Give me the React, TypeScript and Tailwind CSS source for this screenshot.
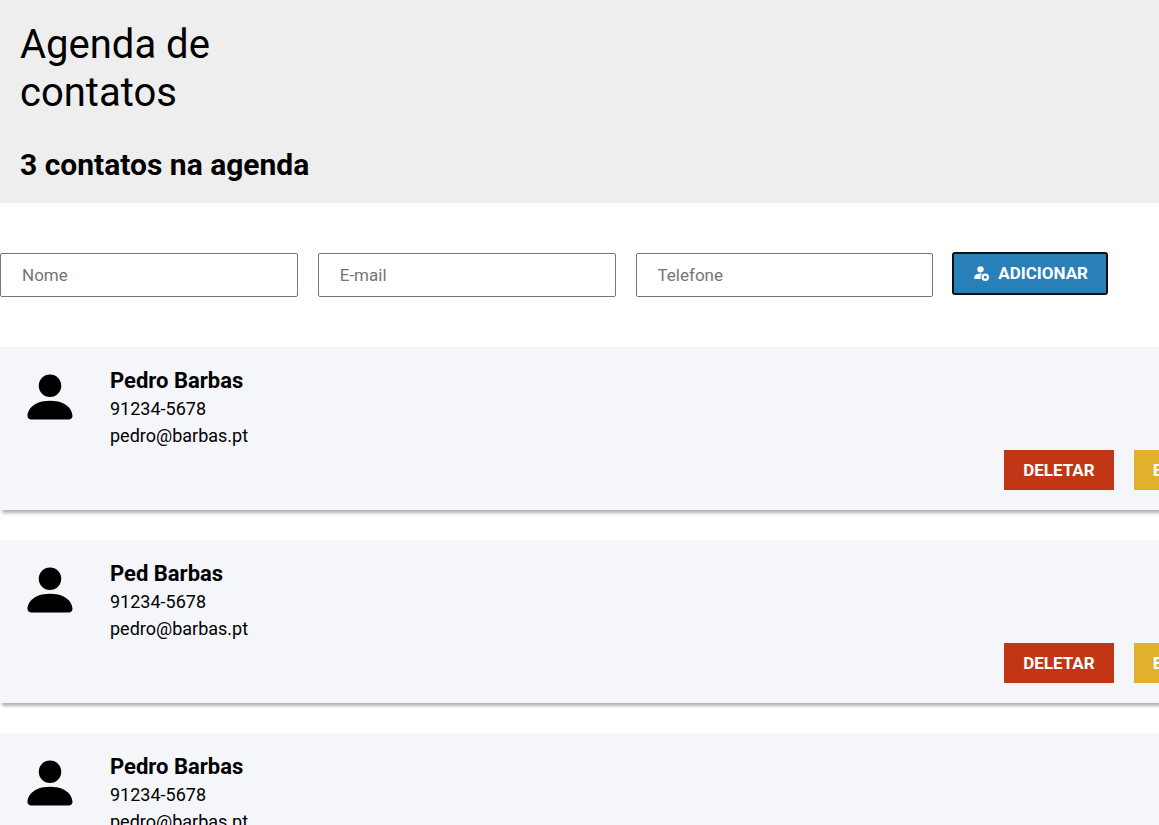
import { useState } from "react";
import { BsPersonFill } from "react-icons/bs";

type Contact = { id: number; name: string; phone: string; email: string };

const initialContacts: Contact[] = [
  { id: 1, name: "Pedro Barbas", phone: "91234-5678", email: "pedro@barbas.pt" },
  { id: 2, name: "Ped Barbas", phone: "91234-5678", email: "pedro@barbas.pt" },
  { id: 3, name: "Pedro Barbas", phone: "91234-5678", email: "pedro@barbas.pt" },
];

const fields = [
  { name: "nome", label: "Nome", type: "text" },
  { name: "email", label: "E-mail", type: "email" },
  { name: "telefone", label: "Telefone", type: "tel" },
];

function PersonBadgeIcon() {
  return (
    <svg viewBox="0 0 16 16" fill="currentColor" aria-hidden="true" className="mb-1 size-[17px]">
      <path d="M11 5a3 3 0 1 1-6 0 3 3 0 0 1 6 0" />
      <path d="M2 13c0 1 1 1 1 1h5.256A4.5 4.5 0 0 1 8 12.5a4.5 4.5 0 0 1 1.544-3.393Q8.844 9.002 8 9c-5 0-6 3-6 4" />
      <path
        fillRule="evenodd"
        d="M12.5 9a3.5 3.5 0 1 1 0 7 3.5 3.5 0 0 1 0-7m0 2.1a1.4 1.4 0 1 0 0 2.8 1.4 1.4 0 0 0 0-2.8"
      />
    </svg>
  );
}

function ContactForm({ onAdd }: { onAdd: (data: FormData) => void }) {
  return (
    <form
      className="my-[50px] mr-[52px] grid grid-cols-[1fr_1fr_1fr_auto] items-start gap-5"
      onSubmit={(event) => {
        event.preventDefault();
        onAdd(new FormData(event.currentTarget));
        event.currentTarget.reset();
      }}
    >
      {fields.map((field) => (
        <input
          key={field.name}
          name={field.name}
          type={field.type}
          aria-label={field.label}
          placeholder={field.label}
          className="h-11 w-full min-w-0 rounded-xs border border-[#767676] bg-white px-[21px] text-[17px] placeholder:text-[#757575]"
        />
      ))}
      <button
        type="submit"
        className="flex h-[41px] items-center gap-[9px] rounded-xs bg-[#2980b9] px-[19px] pt-px text-[17px] font-bold text-white uppercase outline-2 -outline-offset-1 outline-[#101010]"
      >
        <PersonBadgeIcon />
        Adicionar
      </button>
    </form>
  );
}

function ContactCard({ contact, onDelete }: { contact: Contact; onDelete: () => void }) {
  return (
    <li className="flex gap-[30px] bg-[#f5f6fa] p-5 shadow-[2px_3px_3px_rgba(0,0,0,0.3)]">
      <BsPersonFill aria-hidden="true" className="size-[60px] shrink-0" />
      <div className="flex-1">
        <h3 className="text-[22px] leading-7 font-bold">{contact.name}</h3>
        <p className="text-lg leading-[27px]">{contact.phone}</p>
        <p className="text-lg leading-[27px]">{contact.email}</p>
        <div className="mt-px flex justify-end gap-5">
          <button
            type="button"
            onClick={onDelete}
            className="h-10 bg-[#c23616] px-[19px] pt-px text-[17px] font-bold text-white uppercase"
          >
            Deletar
          </button>
          <button type="button" className="h-10 bg-[#e1b12c] px-[19px] pt-px text-[17px] font-bold text-white uppercase">
            Editar
          </button>
        </div>
      </div>
    </li>
  );
}

export default function App() {
  const [contacts, setContacts] = useState(initialContacts);

  const addContact = (data: FormData) =>
    setContacts((current) => [
      ...current,
      {
        id: Date.now(),
        name: String(data.get("nome")),
        phone: String(data.get("telefone")),
        email: String(data.get("email")),
      },
    ]);

  return (
    <div className="h-screen overflow-hidden bg-white font-[Roboto,sans-serif] text-black">
      <header className="bg-[#eeeeee] px-5 pt-[21px] pb-5">
        <h1 className="w-[300px] text-[40px] leading-12">Agenda de contatos</h1>
        <h2 className="mt-[30px] text-[30px] leading-9 font-bold">{contacts.length} contatos na agenda</h2>
      </header>
      <main>
        <ContactForm onAdd={addContact} />
        <ul className="-mr-[90px] flex flex-col gap-[30px]">
          {contacts.map((contact) => (
            <ContactCard
              key={contact.id}
              contact={contact}
              onDelete={() => setContacts((current) => current.filter((item) => item.id !== contact.id))}
            />
          ))}
        </ul>
      </main>
    </div>
  );
}
